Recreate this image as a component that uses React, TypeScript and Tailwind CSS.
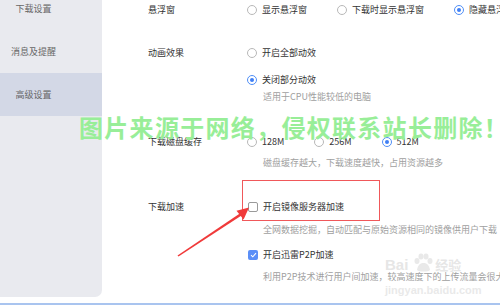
import React from "react";

function Radio({ checked = false }: { checked?: boolean }) {
  return (
    <span
      className={
        "flex h-[10px] w-[10px] shrink-0 items-center justify-center rounded-full border bg-white " +
        (checked ? "border-[#4f8ef7]" : "border-[#b8b8b8]")
      }
    >
      {checked && <span className="h-[4px] w-[4px] rounded-full bg-[#3f7ff5]" />}
    </span>
  );
}

function Opt({ label, checked = false, last = false }: { label: string; checked?: boolean; last?: boolean }) {
  return (
    <div className={"flex shrink-0 items-center " + (last ? "" : "mr-[30px]")}>
      <Radio checked={checked} />
      <span className="ml-[5px] whitespace-nowrap">{label}</span>
    </div>
  );
}

function Check({ checked = false }: { checked?: boolean }) {
  return checked ? (
    <span className="flex h-[10px] w-[10px] shrink-0 items-center justify-center rounded-[2px] bg-[#5b8ff7]">
      <svg width="7" height="6" viewBox="0 0 7 6">
        <path d="M1 3.2 L2.8 4.8 L6 1.2" fill="none" stroke="white" strokeWidth="1.1" />
      </svg>
    </span>
  ) : (
    <span className="h-[10px] w-[10px] shrink-0 rounded-[2px] border border-[#9a9a9a] bg-white" />
  );
}

export default function App() {
  return (
    <div className="relative flex h-[307px] w-[500px] flex-col overflow-hidden bg-white font-['Noto_Sans_CJK_SC',sans-serif] text-[9px] leading-[12px] text-[#333]">
      <div className="flex h-[297px]">
        {/* Sidebar */}
        <div className="flex h-[297px] w-[102px] shrink-0 flex-col overflow-hidden rounded-br-[7px] bg-[#e9eaef] text-[#666]">
          <div className="-mt-[13px] flex h-[43px] shrink-0 items-center">
            <span className="w-[67px] text-center">下载设置</span>
          </div>
          <div className="flex h-[43px] shrink-0 items-center">
            <span className="w-[67px] text-center">消息及提醒</span>
          </div>
          <div className="flex h-[43px] shrink-0 items-center bg-[#d3d8e6]">
            <span className="w-[67px] text-center">高级设置</span>
          </div>
        </div>

        {/* Main */}
        <div className="flex flex-1 flex-col pl-[46px] pt-[4px]">
          {/* 悬浮窗 */}
          <div className="flex">
            <div className="w-[99px] shrink-0">悬浮窗</div>
            <div className="flex">
              <Opt label="显示悬浮窗" />
              <Opt label="下载时显示悬浮窗" />
              <Opt label="隐藏悬浮窗" checked last />
            </div>
          </div>

          {/* 动画效果 */}
          <div className="mt-[31px] flex">
            <div className="w-[99px] shrink-0">动画效果</div>
            <div className="flex flex-col">
              <Opt label="开启全部动效" last />
              <div className="mt-[15px]">
                <Opt label="关闭部分动效" checked last />
              </div>
              <div className="mt-[5px] pl-[16px] whitespace-nowrap text-[#a0a0a0]">适用于CPU性能较低的电脑</div>
            </div>
          </div>

          {/* 下载磁盘缓存 */}
          <div className="mt-[33px] flex">
            <div className="w-[99px] shrink-0">下载磁盘缓存</div>
            <div className="flex flex-col">
              <div className="flex">
                <Opt label="128M" />
                <Opt label="256M" />
                <Opt label="512M" checked last />
              </div>
              <div className="mt-[9px] pl-[16px] whitespace-nowrap text-[#a0a0a0]">磁盘缓存越大，下载速度越快，占用资源越多</div>
            </div>
          </div>

          {/* 下载加速 */}
          <div className="mt-[32px] flex">
            <div className="w-[99px] shrink-0">下载加速</div>
            <div className="flex flex-col">
              <div className="flex items-center pl-[1px]">
                <Check />
                <span className="ml-[5px] whitespace-nowrap">开启镜像服务器加速</span>
              </div>
              <div className="mt-[11px] pl-[16px] whitespace-nowrap text-[#a0a0a0]">全网数据挖掘，自动匹配与原始资源相同的镜像供用户下载</div>
              <div className="mt-[13px] flex items-center pl-[1px]">
                <Check checked />
                <span className="ml-[5px] whitespace-nowrap">开启迅雷P2P加速</span>
              </div>
              <div className="mt-[10px] pl-[16px] whitespace-nowrap text-[#a0a0a0]">利用P2P技术进行用户间加速，较高速度下的上传流量会很大</div>
            </div>
          </div>
        </div>
      </div>
      <div className="h-[6px] shrink-0" />
      <div className="h-[2px] shrink-0 bg-[#a9c4ef]" />

      {/* Red annotation box */}
      <div className="absolute left-[242px] top-[180px] h-[41px] w-[138px] border border-[#f0585a]" />

      {/* Red arrow */}
      <svg className="absolute left-0 top-0" width="500" height="307" viewBox="0 0 500 307">
        <polygon points="177.5,255.6 178.5,256.4 241.5,215.5 240.2,213.3" fill="#f03a3a" />
        <polygon points="249,207.5 236.5,210.8 243.6,219.5" fill="#f03a3a" />
      </svg>

      {/* Baidu watermark */}
      <div className="pointer-events-none absolute left-[385px] top-[253px] flex flex-col text-[#c8c8c8] opacity-45">
        <div className="flex items-end">
          <span className="font-['Liberation_Sans',sans-serif] text-[15px] font-bold leading-[16px]">Bai</span>
          <svg className="ml-[4px]" width="22" height="20" viewBox="0 0 22 20">
            <ellipse cx="5" cy="8" rx="2.5" ry="3" fill="#cfcfcf" />
            <ellipse cx="9" cy="3.5" rx="2.5" ry="3" fill="#cfcfcf" />
            <ellipse cx="14" cy="3.5" rx="2.5" ry="3" fill="#cfcfcf" />
            <ellipse cx="18" cy="8" rx="2.5" ry="3" fill="#cfcfcf" />
            <path d="M5 17 C6 11 9 10 11.5 10 C14 10 17 11 18 17 C16 19 7 19 5 17 Z" fill="#cfcfcf" />
          </svg>
          <span className="ml-[1px] text-[13px] font-bold leading-[16px]">经验</span>
        </div>
        <span className="mt-[12px] font-['Liberation_Sans',sans-serif] text-[11px] font-bold leading-[10px] text-[#d0d0d0]">jingyan.baidu.com</span>
      </div>

      {/* Green watermark */}
      <div className="pointer-events-none absolute left-[79px] top-[113px] whitespace-nowrap text-[24px] font-bold leading-[28px] tracking-[1.3px] text-[#98ee98]">
        图片来源于网络，侵权联系站长删除！
      </div>
    </div>
  );
}
